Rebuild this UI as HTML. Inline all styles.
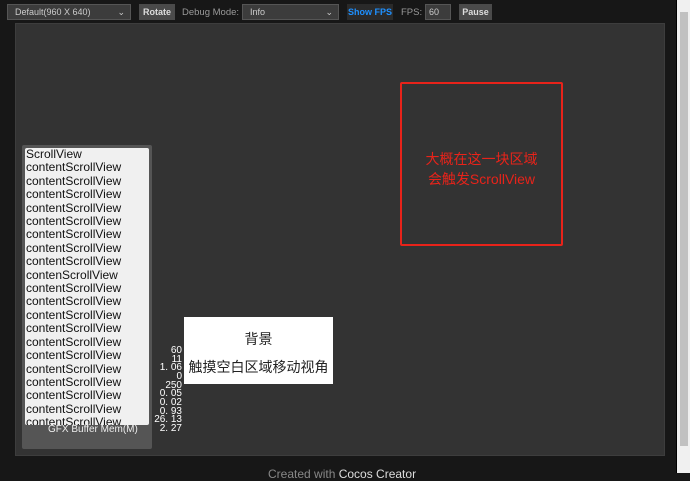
<!DOCTYPE html>
<html><head><meta charset="utf-8"><style>
*{margin:0;padding:0;box-sizing:border-box}
body{width:690px;height:473px;background:#171717;position:relative;overflow:hidden;font-family:"Liberation Sans","Noto Sans CJK SC",sans-serif}
.a{position:absolute}
.sel{background:#3c3c3c;border:1px solid #555;color:#ccc;font-size:9px;height:16px;line-height:14px;padding-left:7px}
.btn{background:#4a4a4a;color:#ddd;font-size:9px;font-weight:bold;height:16px;line-height:16px;text-align:center}
.lbl{color:#999;font-size:9.5px}
.list div{font-size:12px;line-height:13.4px;color:#111;font-family:"Liberation Sans",sans-serif;white-space:nowrap}
.st{font-size:10px;line-height:8.65px;color:#fff;text-align:right;width:40px;font-family:"Liberation Sans",sans-serif}
</style></head><body>
<div class="a sel" style="left:7px;top:4px;width:124px">Default(960 X 640)<span style="position:absolute;right:5px">⌄</span></div>
<div class="a btn" style="left:139px;top:4px;width:36px">Rotate</div>
<div class="a lbl" style="left:182px;top:7px">Debug Mode:</div>
<div class="a sel" style="left:242px;top:4px;width:97px">Info<span style="position:absolute;right:5px">⌄</span></div>
<div class="a btn" style="left:347px;top:4px;width:46px;background:#2a2a2a;color:#1e90ff">Show FPS</div>
<div class="a lbl" style="left:401px;top:7px">FPS:</div>
<div class="a sel" style="left:425px;top:4px;width:26px;padding-left:3px">60</div>
<div class="a btn" style="left:459px;top:4px;width:33px">Pause</div>

<div class="a" style="left:15px;top:23px;width:650px;height:433px;background:#333;border:1px solid #3d3d3d"></div>

<div class="a" style="left:400px;top:82px;width:163px;height:164px;border:2px solid #e8231a;border-radius:2px"></div>
<div class="a" style="left:400px;top:149px;width:163px;text-align:center;color:#e8231a;font-size:14px;line-height:20px">大概在这一块区域<br>会触发ScrollView</div>

<div class="a" style="left:22px;top:145px;width:130px;height:304px;background:#555;border-radius:2px"></div>
<div class="a list" style="left:25px;top:148px;width:124px;height:277px;background:#f0f0f0;border-radius:2px;overflow:hidden;padding-left:1px">
<div>ScrollView</div><div>contentScrollView</div><div>contentScrollView</div><div>contentScrollView</div><div>contentScrollView</div><div>contentScrollView</div><div>contentScrollView</div><div>contentScrollView</div><div>contentScrollView</div><div>contenScrollView</div><div>contentScrollView</div><div>contentScrollView</div><div>contentScrollView</div><div>contentScrollView</div><div>contentScrollView</div><div>contentScrollView</div><div>contentScrollView</div><div>contentScrollView</div><div>contentScrollView</div><div>contentScrollView</div><div>contentScrollView</div>
</div>
<div class="a" style="left:48px;top:424px;color:#eee;font-size:10px">GFX Buffer Mem(M)</div>
<div class="a st" style="left:142px;top:347px">60<br>11<br>1. 06<br>0<br>250<br>0. 05<br>0. 02<br>0. 93<br>26. 13<br>2. 27</div>

<div class="a" style="left:184px;top:317px;width:149px;height:67px;background:#fff;text-align:center;color:#222;font-size:14px">
<div style="margin-top:12px">背景</div><div style="margin-top:8px">触摸空白区域移动视角</div></div>

<div class="a" style="left:268px;top:467px;color:#888;font-size:12px">Created with <span style="color:#ddd">Cocos Creator</span></div>

<div class="a" style="left:676px;top:0;width:1px;height:473px;background:#000"></div>
<div class="a" style="left:677px;top:0;width:13px;height:473px;background:#f0f0f0"></div>
<div class="a" style="left:680px;top:12px;width:8px;height:434px;background:#c1c1c1"></div>
</body></html>
